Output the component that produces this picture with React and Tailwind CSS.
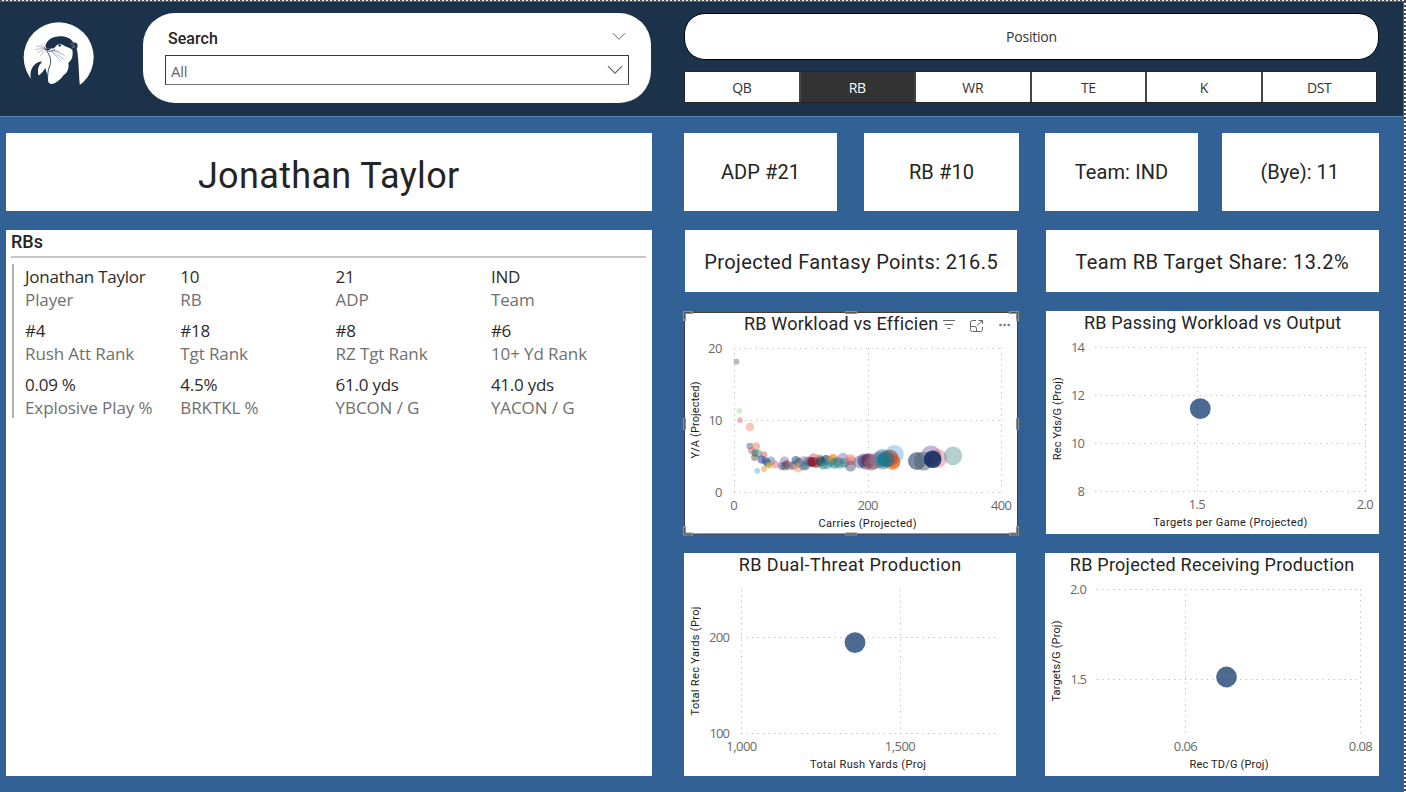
const DIN = "font-['Roboto',sans-serif]";
const UI = "font-['Open_Sans','Noto_Sans',sans-serif]";

function OtterLogo() {
  return (
    <svg viewBox="0 0 270 240" className="h-20 w-[90px]" aria-hidden="true">
      <circle cx="131" cy="127" r="105" fill="#fff" />
      <g fill="#1c324a">
        <path d="M91 94C95 75 112 64 136 64C155 64 169 71 175 83C186 80 192 90 185 101C190 116 191 160 194 208L197 240L90 240L100 200L145 178L158 145L172 108C166 98 154 98 146 92L126 93L116 100L96 102Z" />
        <path d="M20 240L28 206L50 196C42 178 48 157 62 146C69 141 79 138 82 140C70 151 66 163 71 181C78 176 86 168 90 156L97 180L106 240Z" />
        <path d="M52 206H194V240H52Z" />
      </g>
      <path
        d="M93 106C101 110 114 107 120 98C124 88 134 83 144 90C154 97 166 98 172 104C175 120 171 136 160 143C163 161 157 172 146 180C137 193 122 207 108 207C102 206 99 202 99 196C99 181 102 166 106 155C110 142 107 125 93 106Z"
        fill="#fff"
      />
      <path d="M71 181C67 168 70 155 80 145C78 139 84 135 92 143C94 158 86 170 71 181Z" fill="#fff" />
      <g fill="none" stroke="#1c324a" strokeLinecap="round">
        <path d="M95 108C108 124 110 142 103 156C98 168 97 186 98 204" strokeWidth="2.6" />
        <path d="M89 99C90 105 99 105 105 102" strokeWidth="4" />
        <path d="M96 106C104 112 114 108 119 104" strokeWidth="2.4" />
      </g>
      <g fill="none" stroke="#6d7b8b" strokeWidth="1.5" strokeLinecap="round">
        <path d="M84 98L64 93M86 101L62 103M87 104L68 113M90 107L76 123M86 95L77 89" />
        <path d="M113 106L148 120M110 108L147 133M110 110L138 138M116 104L134 111" />
      </g>
      <circle cx="134" cy="91" r="4.2" fill="#1c324a" stroke="#aeb7c0" strokeWidth="1.8" />
      <path d="M167 88C175 85 181 90 177 98M171 93L175 99" fill="none" stroke="#9da8b4" strokeWidth="2" />
    </svg>
  );
}

function Chevron({ className }) {
  return (
    <svg viewBox="0 0 16 10" className={className} fill="none" stroke="#606060" strokeWidth="1.1" aria-hidden="true">
      <path d="M1 1.2L8 8.2L15 1.2" />
    </svg>
  );
}

const POSITIONS = ["QB", "RB", "WR", "TE", "K", "DST"];

function Header() {
  return (
    <header className="flex h-[116px] shrink-0 border-t border-b border-t-[#1f6fb0] border-b-[#5b87b4] bg-[#1c324a]">
      <div className="flex w-[143px] shrink-0 pt-[13px] pl-[15px]">
        <OtterLogo />
      </div>
      <section className="mt-[11px] flex h-[90px] w-[508px] shrink-0 flex-col rounded-[32px] bg-white pr-[22px] pl-[22px]">
        <div className="flex h-[42px] items-center justify-between pt-[9px] pr-[3px] pl-[3px]">
          <span className={`${DIN} text-[16px] font-medium tracking-[0.05px] text-[#252423]`}>Search</span>
          <Chevron className="mb-1 h-[9px] w-[14px]" />
        </div>
        <div className="flex h-[30px] items-center justify-between border border-[#3a3a3a] border-b-[#777] pr-[5px] pl-[5px]">
          <span className={`${UI} pt-[3px] text-[15px] tracking-[-0.3px] text-[#666]`}>All</span>
          <Chevron className="h-[10px] w-[16px]" />
        </div>
      </section>
      <section className="ml-[33px] w-[695px] shrink-0 pt-[11px]">
        <div className={`${UI} flex h-[47px] items-center justify-center rounded-[21px] border border-black bg-white text-[14px] tracking-[-0.2px] text-[#333]`}>
          Position
        </div>
        <div className="mt-[11px] flex w-[693px] border border-[#252423] bg-[#555]">
          {POSITIONS.map((p) => (
            <div
              key={p}
              className={`${UI} flex h-[30px] flex-1 items-center justify-center border-r-2 border-[#444] text-[14px] tracking-[-0.4px] last:border-r-0 ${
                p === "RB" ? "bg-[#333] text-white" : "bg-white text-[#333]"
              }`}
            >
              {p}
            </div>
          ))}
        </div>
      </section>
    </header>
  );
}

const STATS = [
  [["Jonathan Taylor", "Player"], ["10", "RB"], ["21", "ADP"], ["IND", "Team"]],
  [["#4", "Rush Att Rank"], ["#18", "Tgt Rank"], ["#8", "RZ Tgt Rank"], ["#6", "10+ Yd Rank"]],
  [["0.09 %", "Explosive Play %"], ["4.5%", "BRKTKL %"], ["61.0 yds", "YBCON / G"], ["41.0 yds", "YACON / G"]],
];

function PlayerPanel() {
  return (
    <div className="flex w-[645.5px] shrink-0 flex-col gap-[19px]">
      <h1 className={`${DIN} flex h-[78px] items-center justify-center bg-white pt-[8px] text-[36px] tracking-[0.35px] text-[#252423]`}>
        Jonathan Taylor
      </h1>
      <section className="h-[545.5px] bg-white pr-[6px] pl-[5px]">
        <h2 className={`${DIN} h-[28px] border-b-2 border-[#c8c8c8] text-[18px] leading-6 font-medium text-[#252423]`}>RBs</h2>
        <div className={`${UI} mt-[6px] ml-px flex flex-col gap-2 border-l-2 border-[#b3b0ad] pl-[11px] text-[17px] leading-[23px]`}>
          {STATS.map((row, i) => (
            <div key={i} className="grid grid-cols-[155.3px_155.3px_155.3px_1fr]">
              {row.map(([value, label]) => (
                <div key={label} className="translate-y-px">
                  <div className="tracking-[-0.25px] text-[#2d2c2b]">{value}</div>
                  <div className="tracking-[-0.1px] text-[#707070]">{label}</div>
                </div>
              ))}
            </div>
          ))}
        </div>
      </section>
    </div>
  );
}

function Card({ className, children }) {
  return (
    <div className={`${DIN} flex shrink-0 items-center justify-center bg-white whitespace-nowrap text-[#252423] ${className}`}>
      {children}
    </div>
  );
}

function Tick({ x, y, w, anchor = "middle", children }) {
  return (
    <text x={x} y={y} textAnchor={anchor} textLength={w} className={`${UI} text-[13px]`} fill="#6b6967">
      {children}
    </text>
  );
}

function XTitle({ x, y, w, children }) {
  return (
    <text x={x} y={y} textAnchor="middle" textLength={w} className={`${DIN} text-[11px]`} fill="#1b1a19">
      {children}
    </text>
  );
}

function YTitle({ x, y, w, children }) {
  return (
    <text transform={`translate(${x} ${y}) rotate(-90)`} textAnchor="middle" textLength={w} className={`${DIN} text-[11px]`} fill="#1b1a19">
      {children}
    </text>
  );
}

function Grid({ xs, ys, x0, x1, y0, y1 }) {
  return (
    <g stroke="#bdbbb9" strokeWidth="1" strokeDasharray="1.2 4.3">
      {ys.map((y) => <line key={`h${y}`} x1={x0} x2={x1} y1={y} y2={y} />)}
      {xs.map((x) => <line key={`v${x}`} x1={x} x2={x} y1={y0} y2={y1} />)}
    </g>
  );
}

function ChartCard({ title, className, titleClass, tools, children }) {
  return (
    <section className={`relative flex shrink-0 flex-col bg-white ${className}`}>
      <div className="flex h-6 w-full">
        <h3 className={`${DIN} text-[18px] leading-6 whitespace-nowrap text-[#252423] ${titleClass}`}>{title}</h3>
        {tools}
      </div>
      {children}
    </section>
  );
}

function VisualTools() {
  return (
    <svg width="78" height="24" viewBox="940 312 78 24" className="ml-[2px] shrink-0" fill="none" stroke="#666" strokeWidth="1" aria-hidden="true">
      <path d="M943 320.5H955M945 324.5H953M947.5 328.5H950.5" />
      <path d="M976 320.5H972.5Q970.5 320.5 970.5 322.5V329.5Q970.5 331.5 972.5 331.5H980.5Q982.5 331.5 982.5 329.5V327M970.5 326.5H974.5Q976.5 326.5 976.5 328.5V331.5M977 325.5L982.5 320.5M978.5 320.5H982.5V324" />
      <g fill="#777" stroke="none">
        <circle cx="1000.5" cy="325" r="1.3" />
        <circle cx="1004.6" cy="325" r="1.3" />
        <circle cx="1008.7" cy="325" r="1.3" />
      </g>
    </svg>
  );
}

// Each bubble: centre x, centre y, radius, colour, opacity.
const BUBBLES = [
  [736.5, 361.7, 2.9, "#5f6b6d", 0.45], [739.3, 411, 2.8, "#a5dc82", 0.5], [740, 420.2, 2.9, "#e66c8c", 0.5],
  [750, 427, 4.3, "#fd9070", 0.5], [749.7, 446, 3.3, "#4a6085", 0.5], [756, 446.2, 4, "#e08060", 0.5],
  [751.5, 450.5, 3.5, "#c94f5e", 0.45], [755, 453, 3.6, "#2f6b62", 0.55], [758, 453.5, 4, "#488f7f", 0.5],
  [754.5, 457.5, 3.4, "#7a4b3b", 0.5], [764, 454.5, 3.3, "#d64550", 0.45], [757.3, 470.7, 2.8, "#6bb7df", 0.55],
  [764, 469, 3, "#fd9050", 0.55], [761.5, 459.5, 4, "#12308d", 0.5], [765.5, 461, 4, "#3b3f95", 0.5],
  [767.5, 463, 4.2, "#1f6675", 0.55], [771, 461, 4.5, "#3b6fa0", 0.45], [769.5, 465.5, 3.2, "#e8b52a", 0.65],
  [775.5, 464.5, 3.8, "#e66c8c", 0.5], [782, 466, 4, "#4d5a76", 0.5], [784.5, 461, 4.6, "#8f6bb5", 0.5],
  [787, 464.5, 4.4, "#773850", 0.5], [790, 466, 4, "#d25f5f", 0.5], [785, 466, 4.5, "#30555b", 0.45],
  [796, 460.5, 4.6, "#244a79", 0.55], [793.5, 465.5, 4.4, "#4d6587", 0.5], [799, 463, 5, "#1e6162", 0.5],
  [798, 467.5, 5, "#fd9070", 0.5], [803.5, 466, 4.6, "#516887", 0.5], [804, 461, 4.8, "#8b6da8", 0.5],
  [806, 465.5, 4.5, "#218287", 0.5], [808.5, 461.5, 5, "#2e7686", 0.55], [811, 462, 5, "#75406c", 0.5],
  [813.5, 458.5, 5.2, "#d64550", 0.45], [812.5, 462, 5, "#7a1024", 0.7], [816, 463, 5, "#921e26", 0.6],
  [819.5, 459.5, 5, "#b16374", 0.5], [821, 461.5, 5, "#1c4152", 0.65], [823, 464.5, 5, "#20746d", 0.5],
  [826, 460, 5, "#17494c", 0.6], [827, 464.5, 5, "#3599a5", 0.5], [830.5, 461.5, 5.3, "#3f83a6", 0.5],
  [833, 459, 5, "#f08d2a", 0.7], [834.5, 463.5, 5.2, "#1c8380", 0.5], [838, 462, 5.2, "#197c79", 0.5],
  [840, 464, 5, "#4d978d", 0.45], [843, 458.5, 5.7, "#8064b5", 0.45], [844.5, 462.8, 5, "#238187", 0.5],
  [850.5, 459.5, 5.6, "#fd806b", 0.5], [850.5, 466, 5.6, "#4a5776", 0.5], [851, 461, 4.6, "#cf5463", 0.35],
  [860, 462, 6.5, "#5d6fa0", 0.5], [864, 460.5, 7, "#584481", 0.5], [866.5, 462, 7.8, "#31438b", 0.5],
  [869, 460.5, 7.3, "#76103a", 0.55], [871.5, 463.5, 7.2, "#e45c3e", 0.5], [873, 462, 7.5, "#356f89", 0.45],
  [877, 460.5, 8, "#a67195", 0.5], [880.5, 459.5, 8.3, "#b3647c", 0.45], [882.5, 457.5, 8.6, "#3386b2", 0.5],
  [894.5, 454.2, 9.3, "#6bb7df", 0.5], [892, 461.5, 8.4, "#f47e10", 0.6], [890, 458, 8.6, "#b82733", 0.5],
  [893.5, 462, 6.8, "#e25417", 0.5], [883, 462, 7.6, "#218692", 0.5], [886.5, 459, 8.5, "#0c708f", 0.45],
  [884.5, 459.5, 7.4, "#087d92", 0.45],
  [917, 461, 9, "#233b68", 0.6], [923.5, 461, 9.6, "#4e646f", 0.55], [931, 455.5, 10, "#8071ad", 0.5],
  [937.5, 458.5, 9.5, "#d65c75", 0.4], [932.7, 459.2, 8.8, "#0b2a5f", 0.85], [953, 455.8, 9.3, "#5c9293", 0.45],
];

function SelectionFrame() {
  return (
    <svg viewBox="683 311 336 225" className="pointer-events-none absolute -top-px -left-px h-[225px] w-[336px]" fill="none" aria-hidden="true">
      <rect x="684.5" y="312.5" width="333" height="221.5" stroke="#3f3f3f" />
      <g stroke="#8f8f8f" strokeWidth="3">
        <path d="M684.5 321V312.5H693M1009 312.5H1017.5V321M684.5 526V534H693M1009 534H1017.5V526" />
        <path d="M845 312.5H857M845 534H857M684.5 418V430M1017.5 418V430" />
      </g>
      <path d="M684.5 319V312.5H691M1011 312.5H1017.5V319M684.5 528V534H691M1011 534H1017.5V528M846 312.5H856M846 534H856M684.5 419V429M1017.5 419V429" stroke="#555" />
    </svg>
  );
}

function Dot({ cx, cy }) {
  return <circle cx={cx} cy={cy} r="10.4" fill="#12396b" fillOpacity="0.75" />;
}

export default function App() {
  return (
    <div className="flex h-[792px] w-[1406px] flex-col overflow-hidden bg-[#326295]">
      <div className="h-px shrink-0 bg-[repeating-linear-gradient(90deg,#4a4a4a_0_2px,#ffffff_2px_4px)]" />
      <div className="flex min-h-0 flex-1">
        <div className="flex w-[1404px] shrink-0 flex-col border-r border-[#1f6fb5]">
          <Header />
          <main className="flex pt-4 pl-[6px]">
            <PlayerPanel />
            <div className="ml-[32.5px] flex w-[696px] shrink-0 flex-col">
              <div className="flex h-[78px] text-[20px]">
                <Card className="w-[153px] tracking-[0.1px]">ADP #21</Card>
                <Card className="ml-[27px] w-[155px] tracking-[0.1px]">RB #10</Card>
                <Card className="ml-[26px] w-[153px] tracking-[0.1px]">Team: IND</Card>
                <Card className="ml-6 w-[157.4px] pr-[2px]">(Bye): 11</Card>
              </div>
              <div className="mt-[19px] flex h-[62.4px] pl-px text-[20px]">
                <Card className="w-[332.4px] pt-[2px] tracking-[0.4px]">Projected Fantasy Points: 216.5</Card>
                <Card className="ml-[28.6px] w-[333.4px] pt-[2px] pr-px tracking-[0.5px]">Team RB Target Share: 13.2%</Card>
              </div>
              <div className="mt-[18.6px] flex h-[223px]">
                <ChartCard title="RB Workload vs Efficien" className="mt-px h-[222px] w-[334px]" titleClass="ml-[60px] w-[194px] tracking-[0.2px]" tools={<VisualTools />}>
                  <svg viewBox="684 336 334 198" className="h-[198px] w-[334px]">
                    <Grid xs={[734.5, 868.5, 1001.5]} ys={[348.5, 420.5, 492.5]} x0={734} x1={1002} y0={348} y1={493} />
                    <Tick x={722.5} y={353} w={14.5} anchor="end">20</Tick>
                    <Tick x={722.5} y={425} w={14} anchor="end">10</Tick>
                    <Tick x={722.5} y={497} w={7} anchor="end">0</Tick>
                    <Tick x={734} y={510} w={7}>0</Tick>
                    <Tick x={868} y={510} w={21}>200</Tick>
                    <Tick x={1001.5} y={510} w={21}>400</Tick>
                    <XTitle x={867.5} y={527} w={98}>Carries (Projected)</XTitle>
                    <YTitle x={699} y={420} w={77}>Y/A (Projected)</YTitle>
                    {BUBBLES.map(([cx, cy, r, fill, o], i) => (
                      <circle key={i} cx={cx} cy={cy} r={r} fill={fill} fillOpacity={o} />
                    ))}
                  </svg>
                  <SelectionFrame />
                </ChartCard>
                <ChartCard title="RB Passing Workload vs Output" className="ml-7 w-[333.4px]" titleClass="w-full text-center tracking-[0.18px]">
                  <svg viewBox="1046 335 333.4 199" className="h-[199px] w-[333.4px]">
                    <Grid xs={[1197.5, 1365.5]} ys={[347.5, 395.5, 443.5, 491.5]} x0={1095} x1={1366} y0={347} y1={492} />
                    <Tick x={1085} y={352} w={14} anchor="end">14</Tick>
                    <Tick x={1085} y={400} w={14} anchor="end">12</Tick>
                    <Tick x={1085} y={448} w={14} anchor="end">10</Tick>
                    <Tick x={1085} y={496} w={7} anchor="end">8</Tick>
                    <Tick x={1197.3} y={509} w={17}>1.5</Tick>
                    <Tick x={1365.3} y={509} w={17}>2.0</Tick>
                    <XTitle x={1230.3} y={526} w={154}>Targets per Game (Projected)</XTitle>
                    <YTitle x={1061} y={418.7} w={83}>Rec Yds/G (Proj)</YTitle>
                    <Dot cx={1200.3} cy={408.7} />
                  </svg>
                </ChartCard>
              </div>
              <div className="mt-[19px] flex h-[223px]">
                <ChartCard title="RB Dual-Threat Production" className="w-[332.4px]" titleClass="w-full text-center tracking-[0.46px]">
                  <svg viewBox="684 577 332.4 199" className="h-[199px] w-[332.4px]">
                    <Grid xs={[741.5, 900.5]} ys={[637.5, 733.5]} x0={741} x1={996} y0={590} y1={734} />
                    <Tick x={730} y={642} w={21} anchor="end">200</Tick>
                    <Tick x={730} y={738} w={20.5} anchor="end">100</Tick>
                    <Tick x={741.8} y={751} w={31}>1,000</Tick>
                    <Tick x={900.3} y={751} w={31}>1,500</Tick>
                    <XTitle x={868} y={768} w={116}>Total Rush Yards (Proj</XTitle>
                    <YTitle x={699} y={661} w={109}>Total Rec Yards (Proj</YTitle>
                    <Dot cx={855} cy={642.6} />
                  </svg>
                </ChartCard>
                <ChartCard title="RB Projected Receiving Production" className="ml-[28.6px] w-[334.4px]" titleClass="w-full text-center tracking-[0.24px]">
                  <svg viewBox="1045 577 334.4 199" className="h-[199px] w-[334.4px]">
                    <Grid xs={[1185.5, 1360.5]} ys={[589.5, 679.5]} x0={1097} x1={1361} y0={589} y1={735} />
                    <Tick x={1087} y={594} w={17} anchor="end">2.0</Tick>
                    <Tick x={1087} y={684} w={16.5} anchor="end">1.5</Tick>
                    <Tick x={1185.8} y={751} w={24}>0.06</Tick>
                    <Tick x={1360.8} y={751} w={24}>0.08</Tick>
                    <XTitle x={1229} y={768} w={79}>Rec TD/G (Proj)</XTitle>
                    <YTitle x={1060.5} y={661} w={81}>Targets/G (Proj)</YTitle>
                    <Dot cx={1226.5} cy={677} />
                  </svg>
                </ChartCard>
              </div>
            </div>
          </main>
        </div>
        <div className="w-[2px] shrink-0 bg-[repeating-linear-gradient(180deg,#4a4a4a_0_2px,#ffffff_2px_4px)]" />
      </div>
    </div>
  );
}
